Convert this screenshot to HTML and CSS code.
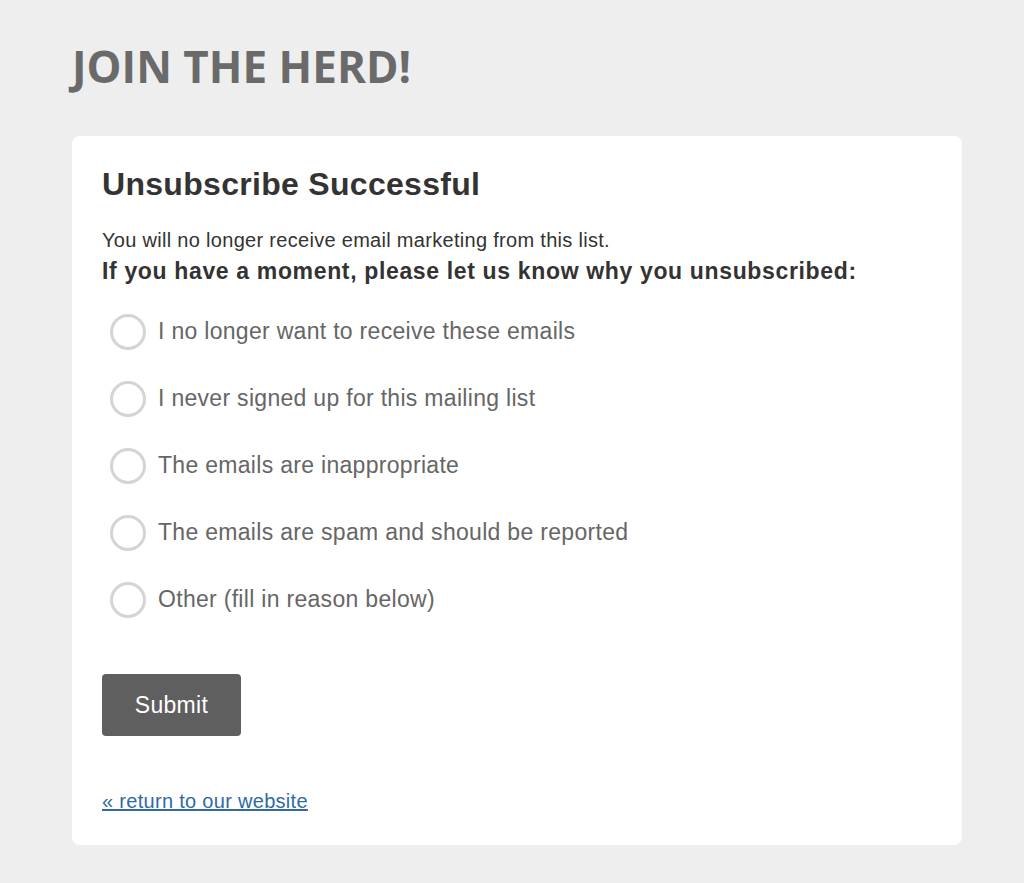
FILE: index.html
```html
<!DOCTYPE html>
<html lang="en">
<head>
<meta charset="utf-8">
<title>Unsubscribe Successful</title>
<link rel="stylesheet" href="styles.css">
</head>
<body>
<div class="page">
  <h1 class="brand">JOIN THE HERD!</h1>
  <div class="card">
    <h2 class="title">Unsubscribe Successful</h2>
    <p class="lead">You will no longer receive email marketing from this list.</p>
    <p class="ask">If you have a moment, please let us know why you unsubscribed:</p>
    <form class="reasons">
      <label class="option"><input type="radio" name="reason"><span class="dot"></span><span class="label">I no longer want to receive these emails</span></label>
      <label class="option"><input type="radio" name="reason"><span class="dot"></span><span class="label">I never signed up for this mailing list</span></label>
      <label class="option"><input type="radio" name="reason"><span class="dot"></span><span class="label">The emails are inappropriate</span></label>
      <label class="option"><input type="radio" name="reason"><span class="dot"></span><span class="label">The emails are spam and should be reported</span></label>
      <label class="option"><input type="radio" name="reason"><span class="dot"></span><span class="label">Other (fill in reason below)</span></label>
      <button type="button" class="submit">Submit</button>
    </form>
    <a class="back" href="#">« return to our website</a>
  </div>
</div>
</body>
</html>
```
FILE: styles.css
```css
html, body {
  margin: 0;
  padding: 0;
  background: #eeeeee;
}
body {
  font-family: "Liberation Sans", Arial, Helvetica, sans-serif;
  color: #333333;
}
.page {
  padding: 36px 62px 38px 72px;
}
.brand {
  margin: 0 0 40px 0;
  font-family: "Open Sans", sans-serif;
  font-weight: 700;
  font-size: 44px;
  line-height: 60px;
  color: #6a6a6a;
}
.card {
  background: #ffffff;
  border-radius: 8px;
  padding: 30px 30px 33px 30px;
}
.title {
  margin: 0 0 25px 0;
  font-size: 32px;
  line-height: 36px;
  font-weight: 700;
  letter-spacing: 0.3px;
  color: #333333;
}
.lead {
  margin: 0;
  font-size: 20px;
  line-height: 26px;
  letter-spacing: 0.3px;
}
.ask {
  margin: 3px 0 0 0;
  font-size: 23px;
  line-height: 30px;
  font-weight: 700;
  letter-spacing: 0.65px;
}
.reasons {
  display: flex;
  flex-direction: column;
  align-items: flex-start;
  gap: 16px;
  margin-top: 20px;
}
.option {
  display: flex;
  align-items: center;
  gap: 12px;
  height: 51px;
  padding-left: 8px;
  font-size: 23px;
  letter-spacing: 0.3px;
  color: #666666;
  cursor: pointer;
}
.option input {
  display: none;
}
.dot {
  box-sizing: border-box;
  width: 36px;
  height: 36px;
  border: 3px solid #d4d4d4;
  border-radius: 50%;
  flex: none;
}
.submit {
  margin-top: 33px;
  width: 139px;
  height: 62px;
  border: none;
  border-radius: 4px;
  background: #5f5f5f;
  color: #ffffff;
  font-family: "Liberation Sans", Arial, sans-serif;
  font-size: 23px;
  letter-spacing: 0.3px;
}
.back {
  display: inline-block;
  margin-top: 54px;
  font-size: 20px;
  line-height: 22px;
  letter-spacing: 0.3px;
  color: #2f6aa4;
  text-decoration: underline;
}
```
